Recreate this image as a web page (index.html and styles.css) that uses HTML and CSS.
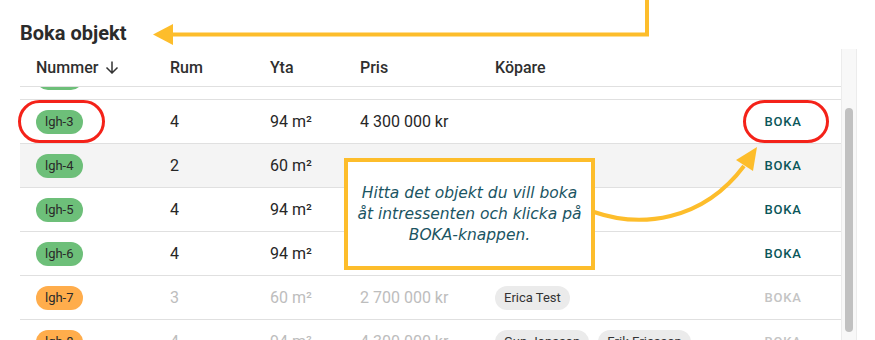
FILE: index.html
```html
<!DOCTYPE html>
<html lang="sv">
<head>
<meta charset="utf-8">
<link rel="stylesheet" href="styles.css">
</head>
<body>
<div class="page">
  <h2 class="title">Boka objekt</h2>
  <div class="panel">
    <div class="table">
      <div class="row head">
        <div class="cell">Nummer <svg class="sort" width="14" height="13" viewBox="0 0 14 13"><path d="M7 0.5 V11.5 M1.5 6.5 L7 12 L12.5 6.5" fill="none" stroke="#333" stroke-width="1.5"/></svg></div>
        <div class="cell">Rum</div>
        <div class="cell">Yta</div>
        <div class="cell">Pris</div>
        <div class="cell">Köpare</div>
        <div class="cell act"></div>
      </div>
      <div class="partial">
        <div class="cell"><span class="pill green">lgh-2</span></div>
      </div>
      <div class="row">
        <div class="cell"><span class="pill green">lgh-3</span></div>
        <div class="cell">4</div>
        <div class="cell">94 m²</div>
        <div class="cell">4 300 000 kr</div>
        <div class="cell"></div>
        <div class="cell act"><span class="btn">BOKA</span></div>
      </div>
      <div class="row hover">
        <div class="cell"><span class="pill green">lgh-4</span></div>
        <div class="cell">2</div>
        <div class="cell">60 m²</div>
        <div class="cell">3 000 000 kr</div>
        <div class="cell"></div>
        <div class="cell act"><span class="btn">BOKA</span></div>
      </div>
      <div class="row">
        <div class="cell"><span class="pill green">lgh-5</span></div>
        <div class="cell">4</div>
        <div class="cell">94 m²</div>
        <div class="cell">4 300 000 kr</div>
        <div class="cell"></div>
        <div class="cell act"><span class="btn">BOKA</span></div>
      </div>
      <div class="row">
        <div class="cell"><span class="pill green">lgh-6</span></div>
        <div class="cell">4</div>
        <div class="cell">94 m²</div>
        <div class="cell">4 300 000 kr</div>
        <div class="cell"></div>
        <div class="cell act"><span class="btn">BOKA</span></div>
      </div>
      <div class="row off">
        <div class="cell"><span class="pill orange">lgh-7</span></div>
        <div class="cell">3</div>
        <div class="cell">60 m²</div>
        <div class="cell">2 700 000 kr</div>
        <div class="cell chips"><span class="chip">Erica Test</span></div>
        <div class="cell act"><span class="btn">BOKA</span></div>
      </div>
      <div class="row off">
        <div class="cell"><span class="pill orange">lgh-8</span></div>
        <div class="cell">4</div>
        <div class="cell">94 m²</div>
        <div class="cell">4 300 000 kr</div>
        <div class="cell chips"><span class="chip">Gun Jonsson</span><span class="chip">Erik Ericsson</span></div>
        <div class="cell act"><span class="btn">BOKA</span></div>
      </div>
    </div>
    <div class="scrollbar"><div class="thumb"></div></div>
  </div>
</div>

<div class="callout"><p class="callout-text">Hitta det objekt du vill boka åt intressenten och klicka på BOKA-knappen.</p></div>

<svg class="overlay" width="875" height="340" viewBox="0 0 875 340">
  <path d="M647 0 V34.5 H168" fill="none" stroke="#fdbd2b" stroke-width="4"/>
  <polygon points="153,34.5 173,24 173,45" fill="#fdbd2b"/>
  <rect x="19.5" y="101.5" width="84" height="40" rx="20" fill="none" stroke="#f42219" stroke-width="3"/>
  <rect x="744.5" y="101.5" width="83" height="40" rx="20" fill="none" stroke="#f42219" stroke-width="3"/>
  <path d="M594 212 C 640 228, 702 222, 744 166" fill="none" stroke="#fdbd2b" stroke-width="4"/>
  <polygon points="757,147 736,160 753,171" fill="#fdbd2b"/>
</svg>
</body>
</html>
```

FILE: styles.css
```css
html, body {
  margin: 0;
  padding: 0;
  background: #fff;
}
body {
  width: 875px;
  height: 340px;
  overflow: hidden;
  position: relative;
  font-family: Roboto, "Liberation Sans", sans-serif;
  color: #222;
}
.page {
  padding: 20px 18px 0 20px;
}
.title {
  margin: 0;
  font-size: 20px;
  font-weight: 700;
  color: #2b2b2b;
  line-height: 26px;
  height: 29px;
}
.panel {
  display: flex;
  height: 300px;
  overflow: hidden;
}
.table {
  flex: 1;
}
.row {
  display: grid;
  grid-template-columns: 134px 100px 90px 135px 1fr 110px;
  align-items: center;
  height: 43px;
  border-bottom: 1px solid #e0e0e0;
  font-size: 16px;
  color: #262626;
}
.row.head {
  height: 37px;
  font-weight: 500;
  color: #2f2f2f;
}
.partial {
  display: flex;
  align-items: flex-end;
  height: 3px;
  padding-bottom: 9px;
  overflow: hidden;
  border-bottom: 1px solid #e0e0e0;
}
.partial .cell {
  flex: none;
}
.row.hover {
  background: #f4f4f4;
}
.row.off .cell {
  color: #bdbdbd;
}
.cell {
  padding-left: 16px;
  white-space: nowrap;
  display: flex;
  align-items: center;
}
.sort {
  margin-left: 7px;
}
.cell.act {
  padding: 0 26px 0 0;
  justify-content: flex-end;
}
.pill {
  display: inline-flex;
  align-items: center;
  height: 24px;
  padding: 0 9px;
  border-radius: 12px;
  font-size: 13px;
  color: #2a2a2a;
}
.row.off .cell .pill {
  color: #2a2a2a;
}
.green { background: #6dbf79; }
.orange { background: #ffad4c; }
.btn {
  display: inline-flex;
  justify-content: center;
  min-width: 64px;
  font-size: 13px;
  font-weight: 500;
  letter-spacing: 0.8px;
  color: #0a5659;
}
.row.off .btn {
  color: #c4c4c4;
}
.chips {
  gap: 9px;
}
.chip {
  display: inline-flex;
  align-items: center;
  height: 24px;
  padding: 0 9px;
  border-radius: 12px;
  background: #ebebeb;
  font-size: 13px;
}
.row.off .cell .chip {
  color: #333;
}
.scrollbar {
  width: 14px;
  background: #f8f8f8;
  border-left: 1px solid #ececec;
  border-right: 1px solid #ececec;
  padding-top: 59px;
  display: flex;
  justify-content: center;
}
.thumb {
  width: 8px;
  height: 224px;
  border-radius: 4px;
  background: #c1c1c1;
}
.callout {
  position: absolute;
  left: 344px;
  top: 158px;
  width: 243px;
  height: 104px;
  border: 4px solid #fdbd2b;
  background: #fff;
  display: flex;
  align-items: center;
  justify-content: center;
}
.callout-text {
  margin: 0;
  width: 232px;
  text-align: center;
  font-family: "DejaVu Sans", "Open Sans", sans-serif;
  font-style: italic;
  font-size: 15.5px;
  line-height: 21px;
  color: #1b5563;
}
.overlay {
  position: absolute;
  left: 0;
  top: 0;
  pointer-events: none;
}
```
